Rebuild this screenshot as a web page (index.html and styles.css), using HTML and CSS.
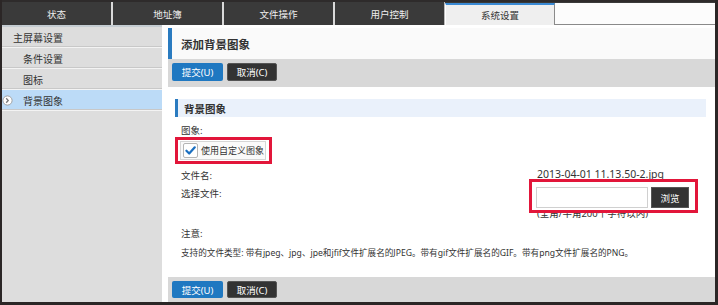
FILE: index.html
```html
<!DOCTYPE html>
<html lang="zh-CN">
<head>
  <meta charset="UTF-8">
  <title>系统设置 - 添加背景图象</title>
  <link rel="stylesheet" href="styles.css">
</head>
<body>
  <div class="frame">

    <!-- Top tabs -->
    <nav class="tabs">
      <div class="tab">状态</div>
      <div class="tab">地址簿</div>
      <div class="tab">文件操作</div>
      <div class="tab">用户控制</div>
      <div class="tab active">系统设置</div>
      <div class="tab-rest"></div>
    </nav>

    <div class="page">
      <!-- Side menu -->
      <aside class="side">
        <div class="side-item">主屏幕设置</div>
        <div class="side-item sub">条件设置</div>
        <div class="side-item sub">图标</div>
        <div class="side-item sub selected">
          <svg class="side-arrow" viewBox="0 0 12 12">
            <circle cx="6" cy="6" r="5" fill="#fff" stroke="#9a9a9a" stroke-width="1"/>
            <path d="M4.6 3.6 L6.8 6 L4.6 8.4" fill="none" stroke="#777" stroke-width="1.4"/>
          </svg>
          背景图象
        </div>
      </aside>

      <!-- Main content -->
      <main class="main">
        <h1 class="title">添加背景图象</h1>
        <div class="toolbar">
          <button class="btn btn-blue">提交(U)</button>
          <button class="btn btn-dark">取消(C)</button>
        </div>

        <div class="form">
          <h2 class="section">背景图象</h2>

          <div class="label">图象:</div>
          <div class="check-mark">
            <label class="check-box">
              <span class="box">
                <svg viewBox="0 0 14 14">
                  <path d="M2.6 7.2 L5.6 10.2 L11.6 3.6" fill="none" stroke="#1b6fc0" stroke-width="2.4" stroke-linecap="round" stroke-linejoin="round"/>
                </svg>
              </span>
              使用自定义图象
            </label>
          </div>

          <div class="row">
            <div class="label">文件名:</div>
            <div class="value file-name">2013-04-01 11.13.50-2.jpg</div>
          </div>

          <div class="row">
            <div class="label pick">选择文件:</div>
            <div class="value">
              <div class="field-mark">
                <input class="file-input" type="text">
                <button class="btn btn-dark btn-browse">浏览</button>
              </div>
              <div class="hint">(全角/半角200个字符以内)</div>
            </div>
          </div>

          <div class="label">注意:</div>
          <p class="note">支持的文件类型: 带有jpeg、jpg、jpe和jfif文件扩展名的JPEG。带有gif文件扩展名的GIF。带有png文件扩展名的PNG。</p>
        </div>

        <div class="toolbar bottom">
          <button class="btn btn-blue">提交(U)</button>
          <button class="btn btn-dark">取消(C)</button>
        </div>
      </main>
    </div>

  </div>
</body>
</html>
```

FILE: styles.css
```css
* {
  box-sizing: border-box;
}

body {
  margin: 0;
  padding: 0;
  font-family: "Noto Sans", "Noto Sans CJK SC", sans-serif;
  font-size: 9.5px;
  color: #333;
  background: #fff;
}

.frame {
  width: 718px;
  height: 305px;
  display: flex;
  flex-direction: column;
  border-left: 2px solid #2b2626;
  border-right: 3px solid #2b2626;
  border-bottom: 3px solid #2b2626;
  overflow: hidden;
}

/* top tabs */
.tabs {
  display: flex;
  height: 25px;
  background: #3a3a3a;
  border-top: 2px solid #2e2b2b;
}

.tab {
  width: 111px;
  display: flex;
  align-items: center;
  justify-content: center;
  color: #eee;
  font-size: 9.5px;
  border-right: 2px solid #d9d9d9;
}

.tab:nth-child(4) {
  border-right: 1px solid #bbb;
  width: 110px;
}

.tab.active {
  width: 110px;
  margin-top: 1px;
  background: #efefef;
  color: #333;
  border-top: 2px solid #3a8ad4;
  border-right: 1px solid #8a8a8a;
  border-left: 1px solid #fff;
}

.tab-rest {
  flex: 1;
  margin-top: 1px;
  background: #fcfcfc;
  border-bottom: 1px solid #8a8a8a;
}

.page {
  flex: 1;
  display: flex;
  min-height: 0;
}

/* side menu */
.side {
  width: 160px;
  background: #dddddd;
  border-top: 2px solid #c4ccd2;
}

.side-item {
  height: 21px;
  display: flex;
  align-items: center;
  padding-left: 11px;
  font-size: 10px;
  color: #333;
  border-bottom: 1px solid #f3f3f3;
  box-shadow: inset 0 -1px 0 #c8c8c8;
}

.side-item.sub {
  padding-left: 21px;
}

.side-item.selected {
  position: relative;
  background: #bcdbf7;
}

.side-arrow {
  position: absolute;
  left: 0;
  top: 5px;
  width: 11px;
  height: 11px;
}

/* main */
.main {
  flex: 1;
  display: flex;
  flex-direction: column;
  margin-left: 6px;
  padding-top: 3px;
  background: #fff;
}

.title {
  margin: 0;
  height: 31px;
  display: flex;
  align-items: center;
  padding-left: 9px;
  font-size: 11.5px;
  font-weight: bold;
  color: #333;
  background: #fafafa;
  border-left: 4px solid #2a7bc0;
}

.toolbar {
  display: flex;
  gap: 4px;
  height: 28px;
  padding: 4px;
  background: #d8d8d8;
}

.toolbar.bottom {
  margin-top: auto;
  height: 25px;
  padding: 4px;
}

.btn {
  height: 18px;
  padding: 0;
  border: none;
  border-radius: 2px;
  font-family: inherit;
  font-size: 9.5px;
  color: #fff;
  cursor: pointer;
}

.bottom .btn {
  height: 17px;
}

.btn-blue {
  width: 51px;
  background: #1f78c1;
}

.btn-dark {
  width: 50px;
  background: #333;
  border: 1px solid #555;
}

/* form */
.form {
  padding: 12px 9px 0 7px;
}

.section {
  margin: 0 0 6px 0;
  height: 18px;
  display: flex;
  align-items: center;
  padding-left: 6px;
  font-size: 10.5px;
  font-weight: bold;
  color: #333;
  background: #eaf1fb;
  border-left: 3px solid #2a7bc0;
}

.label {
  height: 16px;
  line-height: 16px;
  padding-left: 6px;
}

.label.pick {
  margin-top: 2px;
}

.check-mark {
  width: 97px;
  height: 27px;
  margin-top: -2px;
  padding: 1px 3px 1px 2px;
  border: 3px solid #e2163a;
}

.check-box {
  height: 100%;
  display: flex;
  align-items: center;
  gap: 3px;
  padding-left: 2px;
  border: 1px solid #d6d6d6;
  background: #fafafa;
  font-size: 9px;
  white-space: nowrap;
}

.box {
  flex: none;
  width: 15px;
  height: 15px;
  background: #fff;
  border: 1px solid #b5b5b5;
  border-radius: 2px;
}

.box svg {
  display: block;
  width: 13px;
  height: 13px;
}

.row {
  display: grid;
  grid-template-columns: 362px 1fr;
  margin-top: 4px;
}

.row + .row {
  margin-top: 0;
}

.value {
  line-height: 16px;
  font-size: 9.5px;
}

.file-name {
  margin-top: -2px;
  font-size: 10.5px;
}

.field-mark {
  position: relative;
  z-index: 1;
  display: flex;
  gap: 3px;
  width: 169px;
  height: 34px;
  margin: -5px 0 0 -8px;
  padding: 5px 6px 2px 4px;
  background: #fff;
  border: 3px solid #e2163a;
}

.file-input {
  width: 112px;
  height: 21px;
  border: 1px solid #d0d0d0;
  background: #fff;
}

.btn-browse {
  width: 38px;
  height: 21px;
  border-radius: 0;
}

.hint {
  margin: -7px 0 4px 0;
  height: 16px;
}

.note {
  margin: 3px 0 0 0;
  padding-left: 6px;
  line-height: 16px;
  font-size: 8.6px;
}
```
